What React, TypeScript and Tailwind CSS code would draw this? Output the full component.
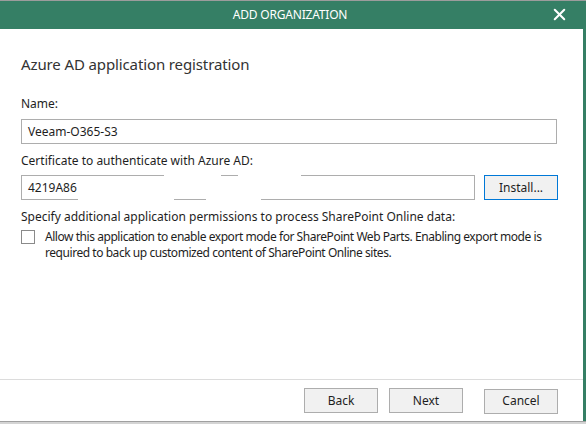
import { X } from 'lucide-react';

const font = { fontFamily: '"Noto Sans", "Open Sans", sans-serif' };

function Btn({ label, focused }: { label: string; focused?: boolean }) {
  return (
    <button
      className={`w-[74px] h-[25px] bg-[#f1f1f1] text-[12px] text-[#1e1e1e] border ${
        focused ? 'border-[#0078d7]' : 'border-[#adadad]'
      }`}
    >
      {label}
    </button>
  );
}

export default function App() {
  return (
    <div className="w-[586px] h-[424px] flex flex-col bg-white text-[#1e1e1e] border-t border-[#9c9c9c]" style={font}>
      <div className="h-[28px] shrink-0 bg-[#357f65] relative flex items-center justify-center pr-[6px] text-white text-[12px] tracking-[-0.2px]">
        <span>ADD ORGANIZATION</span>
        <X size={19} strokeWidth={2.6} className="absolute right-[17px] top-[4px]" />
      </div>

      <div className="flex-1 flex flex-col border-r-[3px] border-[#357f65]">
        <div className="flex-1 px-[21px] pt-[25px]">
          <h1 className="text-[15px] tracking-[-0.12px] text-[#333] leading-[20px]">Azure AD application registration</h1>

          <div className="mt-[22px] text-[12px] leading-[16px]">Name:</div>
          <div className="mt-[7px] w-[536px] h-[25px] border border-[#adadad] flex items-center px-[6px] text-[12px]">
            Veeam-O365-S3
          </div>

          <div className="mt-[9px] text-[12px] leading-[16px]">Certificate to authenticate with Azure AD:</div>
          <div className="mt-[6px] flex items-center gap-[9px]">
            <div className="relative w-[454px] h-[25px] border border-[#adadad] flex items-center px-[6px] text-[12px]">
              4219A86
              {/* redacted part */}
              <div className="absolute left-[56px] top-[3px] w-[240px] h-[18px] bg-white" />
              <div className="absolute left-[142px] top-[-1px] w-[57px] h-[3px] bg-white" />
              <div className="absolute left-[216px] top-[-1px] w-[63px] h-[3px] bg-white" />
              <div className="absolute left-[56px] bottom-[-1px] w-[96px] h-[3px] bg-white" />
              <div className="absolute left-[184px] bottom-[-1px] w-[55px] h-[3px] bg-white" />
            </div>
            <Btn label="Install..." focused />
          </div>

          <div className="mt-[9px] text-[12px] leading-[16px] whitespace-nowrap">
            Specify additional application permissions to process SharePoint Online data:
          </div>
          <div className="mt-[4px] flex gap-[10px] text-[12px] leading-[16px] tracking-[-0.45px]">
            <div className="w-[14px] h-[14px] border border-[#8a8a8a] bg-white shrink-0 mt-[1px]" />
            <div className="whitespace-nowrap">
              Allow this application to enable export mode for SharePoint Web Parts. Enabling export mode is
              <br />
              required to back up customized content of SharePoint Online sites.
            </div>
          </div>
        </div>

        <div className="h-[42px] shrink-0 border-t border-[#dcdcdc] flex items-center justify-end pr-[25px]">
          <div className="flex gap-[11px]">
            <Btn label="Back" />
            <Btn label="Next" />
          </div>
          <div className="ml-[21px]">
            <Btn label="Cancel" />
          </div>
        </div>
      </div>
      <div className="h-[3px] shrink-0 bg-[#d4d4d4] border-t border-[#a0a0a0]" />
    </div>
  );
}
